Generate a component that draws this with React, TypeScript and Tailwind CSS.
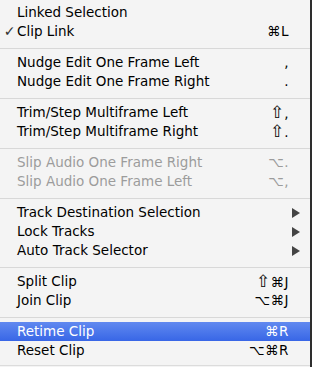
type Item =
  | { kind: "sep" }
  | {
      kind: "item";
      label: string;
      shortcut?: string;
      checked?: boolean;
      disabled?: boolean;
      submenu?: boolean;
      active?: boolean;
    };

const items: Item[] = [
  { kind: "item", label: "Linked Selection" },
  { kind: "item", label: "Clip Link", shortcut: "⌘L", checked: true },
  { kind: "sep" },
  { kind: "item", label: "Nudge Edit One Frame Left", shortcut: "," },
  { kind: "item", label: "Nudge Edit One Frame Right", shortcut: "." },
  { kind: "sep" },
  { kind: "item", label: "Trim/Step Multiframe Left", shortcut: "⇧," },
  { kind: "item", label: "Trim/Step Multiframe Right", shortcut: "⇧." },
  { kind: "sep" },
  { kind: "item", label: "Slip Audio One Frame Right", shortcut: "⌥.", disabled: true },
  { kind: "item", label: "Slip Audio One Frame Left", shortcut: "⌥,", disabled: true },
  { kind: "sep" },
  { kind: "item", label: "Track Destination Selection", submenu: true },
  { kind: "item", label: "Lock Tracks", submenu: true },
  { kind: "item", label: "Auto Track Selector", submenu: true },
  { kind: "sep" },
  { kind: "item", label: "Split Clip", shortcut: "⇧⌘J" },
  { kind: "item", label: "Join Clip", shortcut: "⌥⌘J" },
  { kind: "sep" },
  { kind: "item", label: "Retime Clip", shortcut: "⌘R", active: true },
  { kind: "item", label: "Reset Clip", shortcut: "⌥⌘R" }
];

// the shift glyph is tiny in DejaVu, bump it up
function Shortcut({ text }: { text: string }) {
  return (
    <>
      {text.split("").map((ch, i) =>
        ch === "⇧" ? (
          <span key={i} className="text-[17px] leading-[19px] font-light">
            {ch}
          </span>
        ) : (
          <span key={i}>{ch}</span>
        )
      )}
    </>
  );
}

function MenuRow({ item }: { item: Extract<Item, { kind: "item" }> }) {
  const color = item.active
    ? "text-white bg-gradient-to-b from-[#6189f0] to-[#3866e6]"
    : item.disabled
      ? "text-[#9c9c9c]"
      : "text-black";
  return (
    <div className={`flex items-center h-[19px] ${color}`}>
      <div className="w-[17px] flex justify-center pl-[2px]">
        {item.checked && <span className="text-[14px] text-[#333]">✓</span>}
      </div>
      <div className="flex-1 whitespace-nowrap">{item.label}</div>
      <div className="w-[60px] h-[19px] text-right whitespace-nowrap tracking-[0.5px]">
        {item.shortcut && <Shortcut text={item.shortcut} />}
      </div>
      <div className="w-[21px] flex justify-end pr-[10px]">
        {item.submenu && (
          <svg width="8" height="10" viewBox="0 0 8 10">
            <path d="M0 0 L8 5 L0 10 Z" fill="#444" />
          </svg>
        )}
      </div>
    </div>
  );
}

export default function App() {
  return (
    <div className="w-[312px] h-[367px] bg-[#2e2e2e] flex">
      <div
        className="w-[310px] h-[367px] bg-[#f4f4f4] pt-[3px] text-[13.5px] leading-[19px]"
        style={{ fontFamily: '"DejaVu Sans", "Liberation Sans", sans-serif' }}
      >
        {items.map((item, i) =>
          item.kind === "sep" ? (
            <div key={i} className="h-[12px] pt-[7px]">
              <div className="h-px bg-[#d8d8d8]" />
            </div>
          ) : (
            <MenuRow key={i} item={item} />
          )
        )}
        <div className="mt-[5px] h-px bg-[#dcdcdc]" />
      </div>
    </div>
  );
}
